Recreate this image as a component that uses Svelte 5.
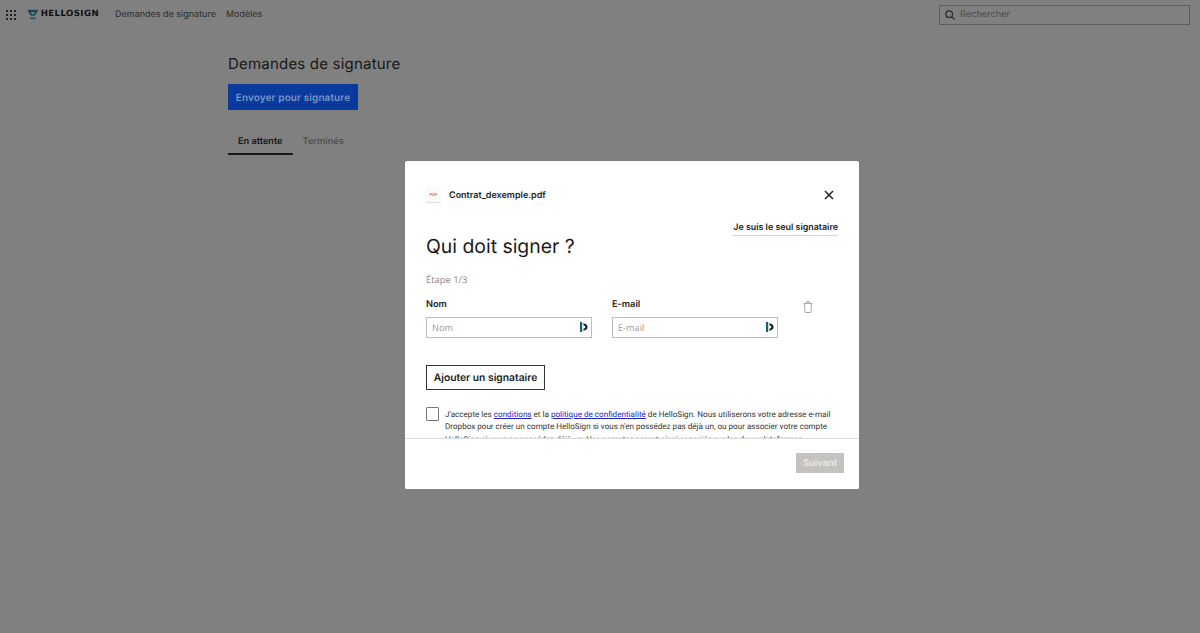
<script>
	let signers = [{ label: 'Nom' }, { label: 'E-mail' }];
</script>

<div class="page">
	<header class="topbar">
		<svg class="apps" width="10" height="10" viewBox="0 0 10 10" fill="#222">
			{#each [0, 4, 8] as y}
				{#each [0, 4, 8] as x}
					<rect {x} {y} width="2" height="2" />
				{/each}
			{/each}
		</svg>
		<div class="logo">
			<svg width="11" height="11" viewBox="0 0 11 11">
				<path d="M0 0h11v2.2L7.6 7H3.4L0 2.2z" fill="#17495a" />
				<path d="M3 3h5L6.6 5.2H4.4z" fill="#808080" />
				<rect x="2.5" y="9" width="6" height="1.6" fill="#17495a" />
			</svg>
			<span>HELLOSIGN</span>
		</div>
		<nav>
			<span>Demandes de signature</span>
			<span>Modèles</span>
		</nav>
		<div class="search">
			<svg width="10" height="10" viewBox="0 0 10 10" fill="none" stroke="#2a2a2a" stroke-width="1.2">
				<circle cx="4.2" cy="4.2" r="3.3" />
				<path d="M6.6 6.6 9.6 9.6" />
			</svg>
			<span>Rechercher</span>
		</div>
	</header>

	<main>
		<h1>Demandes de signature</h1>
		<button class="send">Envoyer pour signature</button>
		<div class="tabs">
			<span class="tab active">En attente</span>
			<span class="tab">Terminés</span>
		</div>
	</main>

	<div class="modal">
		<div class="body">
			<div class="filerow">
				<div class="file">
					<div class="pdf"><span>PDF</span></div>
					<strong>Contrat_dexemple.pdf</strong>
				</div>
				<svg width="10" height="10" viewBox="0 0 10 10" stroke="#222" stroke-width="1.5">
					<path d="M1 1l8 8M9 1l-8 8" />
				</svg>
			</div>
			<div class="solo-row"><span class="solo">Je suis le seul signataire</span></div>
			<h2>Qui doit signer ?</h2>
			<p class="step">Étape 1/3</p>

			<div class="signers">
				{#each signers as s, i}
					<div class="field">
						<label for={'f' + i}>{s.label}</label>
						<div class="input">
							<input id={'f' + i} placeholder={s.label} />
							<svg width="8" height="10" viewBox="0 0 8 10">
								<path d="M0 0h2.2v10H0z" fill="#17606f" />
								<path d="M3.4 1.2C6 1.6 7.6 3 7.6 5S6 8.4 3.4 8.8V6.8C4.6 6.5 5.2 5.9 5.2 5S4.6 3.5 3.4 3.2z" fill="#222" />
							</svg>
						</div>
					</div>
				{/each}
				<svg class="trash" width="10" height="12" viewBox="0 0 10 12" fill="none" stroke="#a9a9a9" stroke-width="1">
					<path d="M.5 2.5h9M3.5 2.2V.7h3v1.5M1.5 2.5l.6 9h5.8l.6-9" />
				</svg>
			</div>

			<button class="add">Ajouter un signataire</button>

			<div class="terms">
				<span class="box"></span>
				<p>
					J'accepte les <a href="#c">conditions</a> et la <a href="#p">politique de confidentialité</a> de HelloSign. Nous utiliserons votre adresse e-mail Dropbox pour créer un compte HelloSign si vous n'en possédez pas déjà un, ou pour associer votre compte HelloSign si vous en possédez déjà un. Vos comptes seront ainsi associés sur les deux plateformes.
				</p>
			</div>
		</div>
		<footer>
			<button class="next">Suivant</button>
		</footer>
	</div>
</div>

<style>
	:global(body) {
		margin: 0;
		background: #808080;
	}

	.page {
		position: relative;
		height: 633px;
		overflow: hidden;
		background: #808080;
		color: #1c1c1c;
		font-family: Inter, "Liberation Sans", sans-serif;
		text-rendering: geometricPrecision;
	}

	.topbar {
		display: flex;
		align-items: center;
		height: 29px;
		padding: 0 10px 0 6px;
	}

	.apps {
		margin-right: 12px;
	}

	.logo {
		display: flex;
		align-items: center;
		gap: 3px;
		width: 71px;
		margin-right: 16px;
		font: 700 8.6px/1 "DejaVu Sans", sans-serif;
		letter-spacing: 0.4px;
		color: #111;
	}

	nav {
		display: flex;
		gap: 10px;
		color: #2c2c2c;
		font-size: 9px;
	}

	.search {
		display: flex;
		align-items: center;
		gap: 5px;
		box-sizing: border-box;
		width: 251px;
		height: 20px;
		margin-left: auto;
		padding-left: 5px;
		border: 1px solid #5c5c5c;
		color: #4c4c4c;
		font-size: 9.2px;
	}

	main {
		display: flex;
		flex-direction: column;
		align-items: flex-start;
		padding: 25px 0 0 228px;
	}

	h1 {
		margin: 0 0 11px;
		font: 400 15px/19px Inter, sans-serif;
		letter-spacing: 0.2px;
		color: #171717;
	}

	.send {
		width: 130px;
		height: 26px;
		padding: 1px 0 0;
		border: 0;
		background: #0a3a9c;
		color: #7496cb;
		font: 600 10px Inter, sans-serif;
		letter-spacing: 0.1px;
		text-rendering: inherit;
	}

	.tabs {
		display: flex;
		margin-top: 17px;
		font-size: 9.2px;
		font-weight: 600;
	}

	.tab {
		padding: 9px 10px 6px;
		color: #4f4f4f;
	}

	.tab.active {
		color: #171717;
		border-bottom: 2px solid #1a1a1a;
	}

	.modal {
		position: absolute;
		left: 405px;
		top: 161px;
		display: flex;
		flex-direction: column;
		width: 454px;
		height: 328px;
		border-radius: 2px;
		background: #fff;
		overflow: hidden;
	}

	.body {
		height: 277px;
		padding: 0 21px;
		overflow: hidden;
	}

	.filerow {
		display: flex;
		align-items: center;
		justify-content: space-between;
		padding: 25px 0 0;
		height: 18px;
	}

	.file {
		display: flex;
		align-items: center;
		gap: 8px;
		font-size: 9px;
	}

	.file strong {
		font-weight: 600;
	}

	.pdf {
		display: flex;
		align-items: center;
		justify-content: center;
		width: 15px;
		height: 15px;
		background: #fafafa;
		border-bottom: 1px solid #ddd;
		color: #e0785a;
		font: 700 4px "Liberation Sans", sans-serif;
	}

	.filerow svg {
		margin-right: 4px;
	}

	.solo-row {
		display: flex;
		justify-content: flex-end;
		margin-top: 18px;
	}

	.solo {
		padding-bottom: 1px;
		border-bottom: 1px solid #d4d4d4;
		font: 600 8.9px/12px Inter, sans-serif;
		color: #222;
	}

	h2 {
		margin: -2px 0 0;
		font: 400 19.4px/24px Inter, sans-serif;
		color: #1a1a1a;
	}

	.step {
		margin: 16px 0 0;
		font: 400 9.4px/12px "Open Sans", sans-serif;
		color: #8a8a8a;
	}

	.signers {
		position: relative;
		display: flex;
		gap: 20.5px;
		margin-top: 13px;
	}

	.field {
		display: flex;
		flex-direction: column;
		gap: 6px;
		width: 165.5px;
	}

	label {
		font-size: 9.2px;
		font-weight: 600;
		line-height: 12px;
		color: #222;
	}

	.input {
		display: flex;
		align-items: center;
		box-sizing: border-box;
		height: 20.5px;
		padding: 0 3px 0 5px;
		border: 1px solid #bdbdbd;
	}

	input {
		flex: 1;
		min-width: 0;
		padding: 0;
		border: 0;
		outline: 0;
		font: 400 9.2px "Open Sans", sans-serif;
		text-rendering: inherit;
	}

	input::placeholder {
		color: #9a9a9a;
	}

	.trash {
		position: absolute;
		left: 377px;
		top: 2px;
	}

	.add {
		display: block;
		width: 119px;
		height: 25px;
		margin-top: 27px;
		padding: 2px 0 0;
		border: 1px solid #333;
		background: #fff;
		color: #1c1c1c;
		font: 600 10.3px Inter, sans-serif;
		text-rendering: inherit;
	}

	.terms {
		display: flex;
		gap: 6px;
		margin-top: 17px;
	}

	.box {
		flex: none;
		box-sizing: border-box;
		width: 13px;
		height: 14px;
		border: 1px solid #777;
		border-radius: 1px;
	}

	.terms p {
		margin: 0;
		padding-top: 1px;
		font: 400 8.1px/12.5px Roboto, sans-serif;
		color: #333;
	}

	.terms a {
		color: #2222cc;
	}

	footer {
		display: flex;
		justify-content: flex-end;
		align-items: flex-start;
		flex: 1;
		padding: 14px 15px 0 0;
		border-top: 1px solid #dcdcdc;
		background: #fff;
	}

	.next {
		width: 48px;
		height: 20px;
		padding: 1px 0 0;
		border: 0;
		background: #c5c3bf;
		color: #e9e8e5;
		font: 600 9.4px Inter, sans-serif;
		text-rendering: inherit;
	}
</style>
